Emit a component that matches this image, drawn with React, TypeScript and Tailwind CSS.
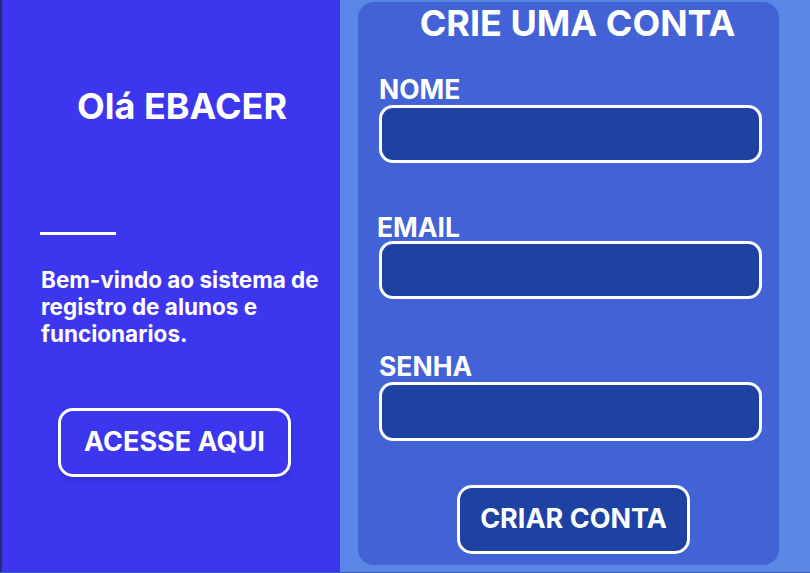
import React from "react";

export default function App() {
  const font = { fontFamily: "Inter, 'Noto Sans', sans-serif" };
  return (
    <div style={font} className="w-[810px] h-[573px] flex bg-[#5a87e6] text-white overflow-hidden border-b border-[#3d5fb8]">
      {/* Left panel */}
      <div className="w-[340px] h-full bg-[#3c36ee] border-l-2 border-[#2a2970] flex flex-col">
        <h1 className="ml-[75px] mt-[89px] text-[36px] leading-[34px] font-bold">Olá EBACER</h1>
        <div className="ml-[38px] mt-[109px] w-[76px] h-[3px] bg-white" />
        <p className="ml-[39px] mt-[31px] w-[296px] text-[22.5px] leading-[27px] font-bold">
          Bem-vindo ao sistema de registro de alunos e funcionarios.
        </p>
        <button className="ml-[56px] mt-[61px] w-[233px] h-[69px] rounded-[15px] border-[3px] border-white shadow-md text-[27px] font-bold flex items-center justify-center">
          ACESSE AQUI
        </button>
      </div>
      {/* Right */}
      <div className="flex-1 pl-[18px] pt-[2px]">
        <div className="w-[421px] h-[563px] rounded-[16px] bg-[#4262d5] flex flex-col px-[21px] pt-[3px]">
          <h2 className="text-center pl-[18px] text-[36px] leading-[36px] font-bold">CRIE UMA CONTA</h2>
          <label className="mt-[36px] text-[26.5px] leading-[25px] font-bold">NOME</label>
          <div className="mt-[3px] w-[383px] h-[58px] rounded-[14px] border-[3px] border-white bg-[#1e42a2]" />
          <label className="mt-[52px] -ml-[2px] text-[26.5px] leading-[25px] font-bold">EMAIL</label>
          <div className="mt-[1px] w-[383px] h-[58px] rounded-[14px] border-[3px] border-white bg-[#1e42a2]" />
          <label className="mt-[55px] text-[26.5px] leading-[25px] font-bold">SENHA</label>
          <div className="mt-[3px] w-[383px] h-[59px] rounded-[14px] border-[3px] border-white bg-[#1e42a2]" />
          <button className="mt-[44px] ml-[78px] w-[233px] h-[69px] rounded-[15px] border-[3px] border-white bg-[#1e42a2] text-[27px] font-bold flex items-center justify-center">
            CRIAR CONTA
          </button>
        </div>
      </div>
    </div>
  );
}
